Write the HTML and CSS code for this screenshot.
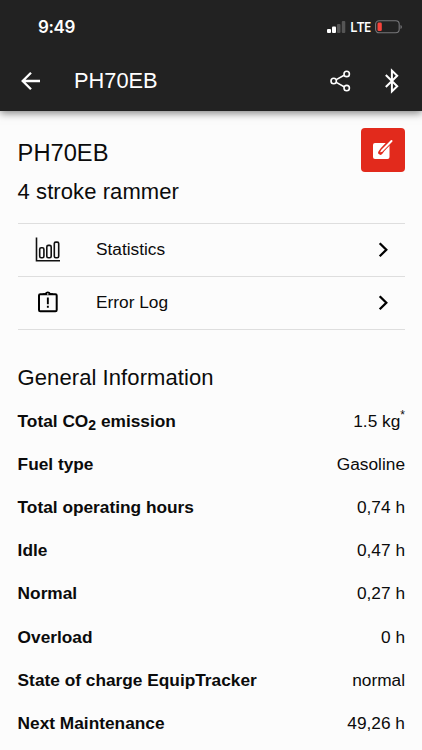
FILE: index.html
```html
<!DOCTYPE html>
<html lang="en">
<head>
<meta charset="utf-8">
<title>PH70EB</title>
<link rel="stylesheet" href="styles.css">
</head>
<body>
<header class="header">
  <div class="status">
    <span class="time">9:49</span>
    <div class="indicators">
      <svg width="20" height="14" viewBox="0 0 20 14"><g fill="#fff"><rect x="1" y="9" width="4" height="4" rx="1"/><rect x="6" y="6.500" width="4" height="6.500" rx="1"/></g><g fill="#555"><rect x="11" y="4" width="3.500" height="9" rx="1"/><rect x="15.800" y="1" width="3.500" height="12" rx="1"/></g></svg>
      <span class="network">LTE</span>
      <svg width="28" height="14" viewBox="0 0 28 14"><rect x=".6" y=".8" width="23.600" height="12" rx="3.500" fill="none" stroke="#77777a" stroke-width="1.100"/><rect x="2.500" y="2.600" width="4.300" height="8.400" rx="1.300" fill="#f8443c"/><path d="M25.500 5v4q1.400-.7 1.400-2t-1.400-2z" fill="#77777a"/></svg>
    </div>
  </div>
  <div class="toolbar">
    <svg class="back" width="22" height="20" viewBox="0 0 22 20"><path d="M11 1.700L2.700 10l8.300 8.300M3 10H20" fill="none" stroke="#fff" stroke-width="2.300"/></svg>
    <h1 class="bar-title">PH70EB</h1>
    <svg class="share" width="22" height="24" viewBox="0 0 22 24"><g fill="none" stroke="#fff" stroke-width="1.600"><circle cx="3.700" cy="12" r="2.700"/><circle cx="16.700" cy="4.900" r="2.700"/><circle cx="16.700" cy="19.100" r="2.700"/><path d="M6.300 10.600L14.100 6.300M6.300 13.400l7.800 4.300"/></g></svg>
    <svg class="bluetooth" width="16" height="26" viewBox="0 0 16 26"><path d="M1.800 7L13.200 18.300 7.900 23.400V2.600L13.200 7.700 1.800 19" fill="none" stroke="#fff" stroke-width="2"/></svg>
  </div>
</header>
<main class="content">
  <section class="machine">
    <div>
      <h2 class="name">PH70EB</h2>
      <p class="kind">4 stroke rammer</p>
    </div>
    <button class="edit" aria-label="Edit"><svg width="24" height="24" viewBox="0 0 24 24"><rect x="2" y="5" width="16.500" height="16" rx="2" fill="#fff"/><path d="M19.700 3.200L11.500 11.700 9.500 14.500" fill="none" stroke="#e22a1c" stroke-width="4.600" stroke-linecap="round"/><path d="M20.500 3L12.300 11.200" fill="none" stroke="#fff" stroke-width="2" stroke-linecap="round"/><path d="M12.800 11.500Q12.500 14 9 14.200L10.500 11.500Q11.800 10.200 12.800 11.500z" fill="#fff"/></svg></button>
  </section>
  <nav class="menu">
    <a class="item">
      <svg class="icon" width="28" height="28" viewBox="0 0 28 28"><g fill="none" stroke="#111" stroke-width="1.600"><path d="M2.500 1.500V24.700H26"/><rect x="5.700" y="11.800" width="4.200" height="10" rx="1.500"/><rect x="12.800" y="9.400" width="4.400" height="12.400" rx="1.500"/><rect x="20.300" y="6.100" width="4.400" height="15.700" rx="1.500"/></g></svg>
      <span class="caption">Statistics</span>
      <svg class="chevron" width="12" height="18" viewBox="0 0 12 18"><path d="M2.700 2.200L9.300 8.700l-6.600 6.500" fill="none" stroke="#000" stroke-width="2.300"/></svg>
    </a>
    <a class="item">
      <svg class="icon" width="28" height="28" viewBox="0 0 28 28"><rect x="5" y="5.200" width="17.700" height="17" rx="1.300" fill="none" stroke="#000" stroke-width="2"/><path d="M8.700 6V4.200h2.200Q11.700 2.400 13.800 2.400t2.900 1.800h2.200V6z"/><circle cx="13.800" cy="5" r=".8" fill="#fff"/><path d="M12.900 8.500h1.900v6.700h-1.900zM12.900 16.800h1.900v2h-1.900z"/></svg>
      <span class="caption">Error Log</span>
      <svg class="chevron" width="12" height="18" viewBox="0 0 12 18"><path d="M2.700 2.200L9.300 8.700l-6.600 6.500" fill="none" stroke="#000" stroke-width="2.300"/></svg>
    </a>
  </nav>
  <h3 class="section-title">General Information</h3>
  <dl class="facts">
    <div class="fact"><dt>Total CO<sub>2</sub> emission</dt><dd>1.5 kg<sup>*</sup></dd></div>
    <div class="fact"><dt>Fuel type</dt><dd>Gasoline</dd></div>
    <div class="fact"><dt>Total operating hours</dt><dd>0,74 h</dd></div>
    <div class="fact"><dt>Idle</dt><dd>0,47 h</dd></div>
    <div class="fact"><dt>Normal</dt><dd>0,27 h</dd></div>
    <div class="fact"><dt>Overload</dt><dd>0 h</dd></div>
    <div class="fact"><dt>State of charge EquipTracker</dt><dd>normal</dd></div>
    <div class="fact"><dt>Next Maintenance</dt><dd>49,26 h</dd></div>
  </dl>
</main>
</body>
</html>
```
FILE: styles.css
```css
* { box-sizing: border-box; }
body {
  margin: 0;
  height: 750px;
  overflow: hidden;
  background: #fcfcfc;
  color: #0b0b0b;
  font-family: "Liberation Sans", Arial, sans-serif;
}
h1, h2, h3, p, dl, dd { margin: 0; font-weight: 400; }
svg { display: block; flex: none; }
.header {
  height: 111px;
  background: #222;
  color: #fff;
  box-shadow: 0 2px 8px rgba(0, 0, 0, .5);
}
.status {
  height: 54px;
  padding: 0 19px 0 38px;
  display: flex;
  align-items: center;
  justify-content: space-between;
}
.time { font: 600 17px/20px Inter, sans-serif; letter-spacing: -.4px; }
.indicators { display: flex; align-items: center; }
.network { width: 25px; margin-left: 4px; font: 600 13.500px/16px "Open Sans", sans-serif; letter-spacing: -.6px; }
.toolbar {
  height: 54px;
  padding: 0 22px 0 20px;
  display: flex;
  align-items: center;
}
.bar-title { flex: 1; margin-left: 32px; font-size: 21.800px; line-height: 26px; }
.share { margin-right: 32px; }
.content { padding: 17px 17px 0 17.600px; }
.machine { height: 95px; display: flex; justify-content: space-between; }
.name { margin-top: 11px; font-size: 23.700px; line-height: 28px; }
.kind { margin-top: 12px; font-size: 22px; line-height: 25px; letter-spacing: .08px; }
.edit {
  width: 44px;
  height: 44px;
  border: 0;
  border-radius: 4px;
  padding: 0;
  display: grid;
  place-items: center;
  background: #e22a1c;
}
.menu { border-top: 1px solid #dedede; }
.item {
  height: 53px;
  border-bottom: 1px solid #dedede;
  display: flex;
  align-items: center;
}
.icon { margin-left: 16.400px; }
.caption { flex: 1; margin: 0 0 2px 34px; font-size: 17.300px; }
.chevron { margin-right: 16px; }
.section-title { margin-top: 35px; font-size: 22px; line-height: 26px; letter-spacing: .08px; }
.facts { margin-top: 8px; font-size: 17.300px; }
.fact {
  height: 43.200px;
  display: flex;
  align-items: center;
  justify-content: space-between;
  line-height: 20px;
}
.fact dt { font-weight: 700; }
.fact sub { font-size: 14px; line-height: 0; vertical-align: -3px; }
.fact sup { font-size: 12px; line-height: 0; vertical-align: 8px; }
```
